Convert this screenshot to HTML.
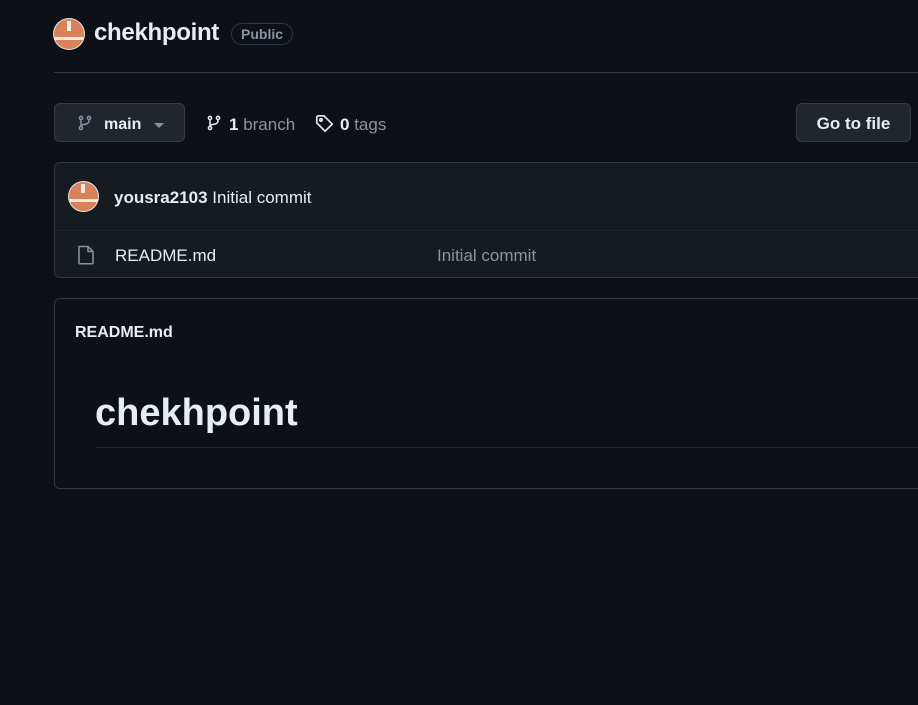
<!DOCTYPE html>
<html><head><style>
body{margin:0;background:#0d1117;width:918px;height:705px;overflow:hidden;font-family:"Liberation Sans",sans-serif;color:#e6edf3;position:relative}
.a{position:absolute}
.av{border-radius:50%;background:#d9825a;overflow:hidden;box-shadow:0 0 0 1px #e6e6e6}
</style></head><body>
<div class="a av" style="left:54px;top:19px;width:30px;height:30px">
 <div class="a" style="left:0;top:18px;width:30px;height:3px;background:#f3e9e4"></div>
 <div class="a" style="left:13px;top:2px;width:4px;height:10px;background:#f3e9e4"></div>
</div>
<div class="a" style="left:94px;top:19px;font-size:24px;font-weight:bold;color:#e6edf3;letter-spacing:-0.3px">chekhpoint</div>
<div class="a" style="left:231px;top:23px;height:20px;padding:0 9px;border:1px solid #30363d;border-radius:12px;font-size:14px;line-height:20px;color:#8b949e;font-weight:bold">Public</div>
<div class="a" style="left:54px;top:72px;width:864px;height:1px;background:#30363d"></div>

<div class="a" style="left:54px;top:103px;width:129px;height:37px;background:#21262d;border:1px solid #363b42;border-radius:6px"></div>
<svg class="a" style="left:77px;top:115px" width="16" height="16" viewBox="0 0 16 16" fill="none" stroke="#8b949e" stroke-width="1.5"><circle cx="4" cy="3" r="1.6"/><circle cx="4" cy="13" r="1.6"/><circle cx="12" cy="3" r="1.6"/><path d="M4 4.6v6.8M12 4.6v1.4c0 2-2 3-4 3.2-2 .2-4 .8-4 2.4"/></svg>
<div class="a" style="left:104px;top:116px;font-size:16px;font-weight:bold">main</div>
<div class="a" style="left:154px;top:123px;width:0;height:0;border-left:5px solid transparent;border-right:5px solid transparent;border-top:5px solid #8b949e"></div>
<svg class="a" style="left:206px;top:114px" width="16" height="18" viewBox="0 0 16 16" fill="none" stroke="#e6edf3" stroke-width="1.5"><circle cx="4" cy="3" r="1.6"/><circle cx="4" cy="13" r="1.6"/><circle cx="12" cy="3" r="1.6"/><path d="M4 4.6v6.8M12 4.6v1.4c0 2-2 3-4 3.2-2 .2-4 .8-4 2.4"/></svg>
<div class="a" style="left:229px;top:115px;font-size:17px;color:#8b949e"><b style="color:#e6edf3">1</b> branch</div>
<svg class="a" style="left:315px;top:114px" width="19" height="19" viewBox="0 0 16 16" fill="none" stroke="#e6edf3" stroke-width="1.4"><path d="M1.5 2.5v5l7 7 6-6-7-7h-5z"/><circle cx="5" cy="5" r="1"/></svg>
<div class="a" style="left:340px;top:115px;font-size:17px;color:#8b949e"><b style="color:#e6edf3">0</b> tags</div>
<div class="a" style="left:796px;top:103px;width:113px;height:37px;background:#21262d;border:1px solid #363b42;border-radius:6px;font-size:17px;font-weight:bold;line-height:40px;text-align:center">Go to file</div>

<div class="a" style="left:54px;top:162px;width:880px;height:114px;border:1px solid #30363d;border-radius:6px;background:#161b22"></div>
<div class="a" style="left:55px;top:230px;width:870px;height:1px;background:#21262d"></div>
<div class="a av" style="left:69px;top:182px;width:29px;height:29px">
 <div class="a" style="left:0;top:17px;width:29px;height:3px;background:#f3e9e4"></div>
 <div class="a" style="left:12px;top:2px;width:4px;height:9px;background:#f3e9e4"></div>
</div>
<div class="a" style="left:114px;top:188px;font-size:17px"><b>yousra2103</b> Initial commit</div>
<svg class="a" style="left:77px;top:245px" width="18" height="20" viewBox="0 0 18 20" fill="none" stroke="#8b949e" stroke-width="1.5"><path d="M2 1.5h9l5 5v11.5a.8.8 0 0 1-.8.8H2.8a.8.8 0 0 1-.8-.8z"/><path d="M11 1.5v5h5"/></svg>
<div class="a" style="left:115px;top:246px;font-size:17px">README.md</div>
<div class="a" style="left:437px;top:246px;font-size:17px;color:#8b949e">Initial commit</div>

<div class="a" style="left:54px;top:298px;width:880px;height:189px;border:1px solid #30363d;border-radius:6px"></div>
<div class="a" style="left:75px;top:324px;font-size:16px;font-weight:bold">README.md</div>
<div class="a" style="left:95px;top:392px;font-size:38px;font-weight:bold">chekhpoint</div>
<div class="a" style="left:95px;top:447px;width:823px;height:1px;background:#21262d"></div>
</body></html>
